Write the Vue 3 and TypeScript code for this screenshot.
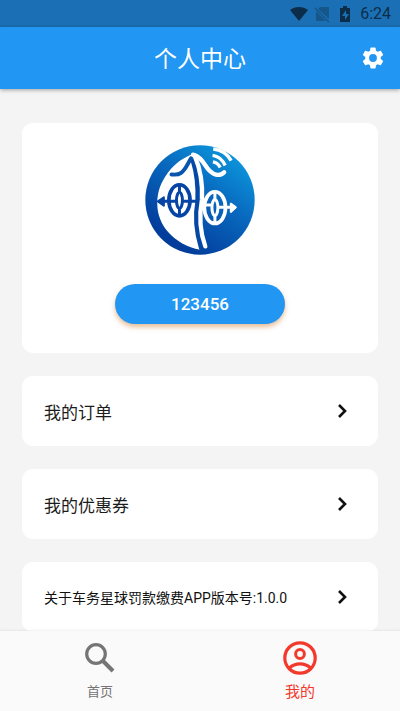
<script setup lang="ts">
import { ref } from 'vue'

interface MenuItem {
  id: string
  label: string
  small?: boolean
}

const account = '123456'
const activeTab = ref('mine')

const items: MenuItem[] = [
  { id: 'orders', label: '我的订单' },
  { id: 'coupons', label: '我的优惠券' },
  { id: 'about', label: '关于车务星球罚款缴费APP版本号:1.0.0', small: true },
]
</script>

<template>
  <div class="screen">
    <div class="status">
      <svg class="status-icon" viewBox="0 0 20 20">
        <path d="M1 6C6 2 14 2 19 6L10 17Z" fill="#0b2d49" />
      </svg>
      <svg class="status-icon" viewBox="0 0 20 20">
        <path d="M8 3h9v12L6 5zM4 7l10 10H4z" fill="#15568b" />
        <path d="M3 4l14 14" stroke="#15568b" stroke-width="1.5" />
      </svg>
      <svg class="status-icon" viewBox="0 0 20 20">
        <path d="M8 2h4v2h3v14H5V4h3z" fill="#0b2d49" />
        <path d="M11 6l-4 6h3v4l4-6h-3z" fill="#1b70b5" />
      </svg>
      <span class="clock">6:24</span>
    </div>

    <header class="bar">
      <h1>个人中心</h1>
      <button class="settings" type="button" aria-label="设置">
        <svg viewBox="0 0 24 24">
          <path fill="#fff" d="M19.14 12.94c.04-.3.06-.61.06-.94s-.02-.64-.07-.94l2.03-1.58a.49.49 0 0 0 .12-.61l-1.92-3.32a.49.49 0 0 0-.59-.22l-2.39.96a7 7 0 0 0-1.62-.94l-.36-2.54a.48.48 0 0 0-.48-.41h-3.84a.47.47 0 0 0-.47.41l-.36 2.54c-.59.24-1.13.57-1.62.94l-2.39-.96a.48.48 0 0 0-.59.22L2.74 8.87a.47.47 0 0 0 .12.61l2.03 1.58c-.05.3-.09.63-.09.94s.02.64.07.94l-2.03 1.58a.49.49 0 0 0-.12.61l1.92 3.32c.12.22.37.29.59.22l2.39-.96c.5.38 1.03.7 1.62.94l.36 2.54c.05.24.24.41.48.41h3.84c.24 0 .44-.17.47-.41l.36-2.54a7 7 0 0 0 1.62-.94l2.39.96c.22.08.47 0 .59-.22l1.92-3.32a.47.47 0 0 0-.12-.61zM12 15.6a3.6 3.6 0 1 1 0-7.2 3.6 3.6 0 0 1 0 7.2z" />
        </svg>
      </button>
    </header>

    <main class="content">
      <section class="card profile">
        <svg class="logo" viewBox="29 28 332 332" role="img" aria-label="车务星球">
          <defs>
            <linearGradient id="disc" x1="0.85" y1="0.1" x2="0.3" y2="0.9">
              <stop offset="0" stop-color="#0c96dc" />
              <stop offset="0.45" stop-color="#0868bd" />
              <stop offset="1" stop-color="#033d9c" />
            </linearGradient>
          </defs>
          <circle cx="195" cy="194" r="165" fill="url(#disc)" />
          <path d="M172 56C146 66 120 82 98 112C76 142 66 170 66 205C66 270 116 328 196 344L184 260L188 160Z" fill="#fff" />
          <g fill="none" stroke-linecap="round" stroke-linejoin="round">
            <path d="M173 76C185 114 189 152 187 198C178 246 183 292 198 340" stroke="#0547a5" stroke-width="12" />
            <path d="M179 60C194 96 204 142 201 193C191 247 195 290 211 334" stroke="#fff" stroke-width="13" />
            <path d="M168 68C156 88 152 102 138 112C130 118 120 118 109 117" stroke="#0755ac" stroke-width="12" />
            <path d="M174 57C202 64 208 90 224 106C238 120 256 123 268 110" stroke="#fff" stroke-width="13" />
            <g stroke="#0644a5" stroke-width="11">
              <ellipse cx="133" cy="195" rx="32" ry="47" />
              <ellipse cx="133" cy="195" rx="9" ry="24" stroke-width="9" />
              <path d="M72 198H122M133 151V168M133 222V240M144 198H186" stroke-width="9" />
              <path d="M86 186L68 198L86 211Z" fill="#0644a5" stroke-width="6" />
            </g>
            <g stroke="#fff" stroke-width="11">
              <ellipse cx="240" cy="217" rx="32" ry="48" />
              <ellipse cx="240" cy="217" rx="9" ry="24" stroke-width="9" />
              <path d="M199 209H228M240 172V190M240 244V262M252 216H300" stroke-width="9" />
              <path d="M288 205L303 216L288 230Z" fill="#fff" stroke-width="6" />
            </g>
            <g stroke="#fff" stroke-width="10" stroke-linecap="butt">
              <path d="M235 40C259 42 278 56 289 75" />
              <path d="M233 59C249 61 263 72 271 90" />
              <path d="M234 79C244 81 252 87 256 96" />
            </g>
          </g>
        </svg>
        <button class="account" type="button">{{ account }}</button>
      </section>

      <button v-for="item in items" :key="item.id" class="card row" :class="{ small: item.small }" type="button">
        <span>{{ item.label }}</span>
        <svg class="chevron" viewBox="0 0 14 14">
          <path d="M4 1l6 6-6 6" fill="none" stroke="#111" stroke-width="2.6" />
        </svg>
      </button>
    </main>

    <nav class="tabs">
      <button type="button" :class="{ active: activeTab === 'home' }" @click="activeTab = 'home'">
        <svg class="tab-icon" viewBox="0 0 36 36">
          <circle cx="14" cy="14" r="9.3" fill="none" stroke="currentColor" stroke-width="3.2" />
          <path d="M20.5 20.5L31 31" fill="none" stroke="currentColor" stroke-width="4" />
        </svg>
        <span>首页</span>
      </button>
      <button type="button" :class="{ active: activeTab === 'mine' }" @click="activeTab = 'mine'">
        <svg class="tab-icon" viewBox="0 0 36 36" fill="none" stroke="currentColor">
          <circle cx="18" cy="18" r="15.2" stroke-width="3.2" />
          <circle cx="18" cy="14" r="4.4" stroke-width="3" />
          <path d="M7.5 28C13 22.5 23 22.5 28.5 28" stroke-width="3.2" />
        </svg>
        <span>我的</span>
      </button>
    </nav>
  </div>
</template>

<style>
body {
  margin: 0;
}
</style>

<style scoped>
.screen {
  display: flex;
  flex-direction: column;
  height: 100vh;
  background: #f4f4f4;
  color: #1c1c1c;
  font-family: Roboto, "Noto Sans CJK SC", sans-serif;
}

button {
  margin: 0;
  padding: 0;
  border: 0;
  background: none;
  color: inherit;
  font: inherit;
  cursor: pointer;
}

svg {
  display: block;
}

.status {
  display: flex;
  flex: none;
  align-items: center;
  justify-content: flex-end;
  height: 27px;
  padding-right: 9px;
  background: #1b70b5;
}

.status-icon {
  width: 20px;
  height: 20px;
  margin-right: 3px;
}

.clock {
  margin-left: 2px;
  color: #0b2d49;
  font-size: 16px;
  line-height: 28px;
}

.bar {
  position: relative;
  z-index: 1;
  display: grid;
  flex: none;
  grid-template-columns: 1fr auto 1fr;
  align-items: center;
  height: 62px;
  padding: 0 14px;
  background: #2196f3;
  box-shadow: 0 1px 4px rgba(0, 0, 0, 0.35);
}

.bar h1 {
  grid-column: 2;
  margin: 0;
  padding-top: 3px;
  color: #fff;
  font-size: 23px;
  font-weight: 400;
  line-height: 32px;
}

.settings {
  justify-self: end;
}

.settings svg {
  width: 26px;
  height: 26px;
}

.content {
  display: flex;
  flex: 1;
  flex-direction: column;
  gap: 23px;
  min-height: 0;
  padding: 34px 22px 0;
  overflow-y: auto;
  scrollbar-width: none;
}

.card {
  flex: none;
  border-radius: 11px;
  background: #fff;
}

.profile {
  display: flex;
  flex-direction: column;
  align-items: center;
  gap: 29px;
  padding: 22px 0 29px;
}

.logo {
  width: 110px;
  height: 110px;
}

.account {
  width: 170px;
  height: 40px;
  border-radius: 20px;
  background: #2196f3;
  box-shadow: 0 3px 5px rgba(205, 125, 50, 0.5);
  color: #fff;
  font-size: 17px;
  font-weight: 500;
}

.row {
  display: flex;
  align-items: center;
  justify-content: space-between;
  height: 70px;
  padding: 0 29px 0 22px;
  font-size: 17px;
  text-align: left;
}

.small {
  font-size: 14px;
  color: #111;
}

.chevron {
  width: 14px;
  height: 14px;
}

.tabs {
  position: relative;
  z-index: 1;
  display: flex;
  flex: none;
  height: 80px;
  background: #fafafa;
  box-shadow: 0 -1px 2px rgba(0, 0, 0, 0.06);
}

.tabs button {
  display: flex;
  flex: 1;
  flex-direction: column;
  align-items: center;
  justify-content: center;
  gap: 6px;
  color: #757575;
  font-size: 13px;
  line-height: 20px;
}

.tabs .active {
  color: #f3392c;
  font-size: 15px;
}

.tab-icon {
  width: 36px;
  height: 36px;
}
</style>
